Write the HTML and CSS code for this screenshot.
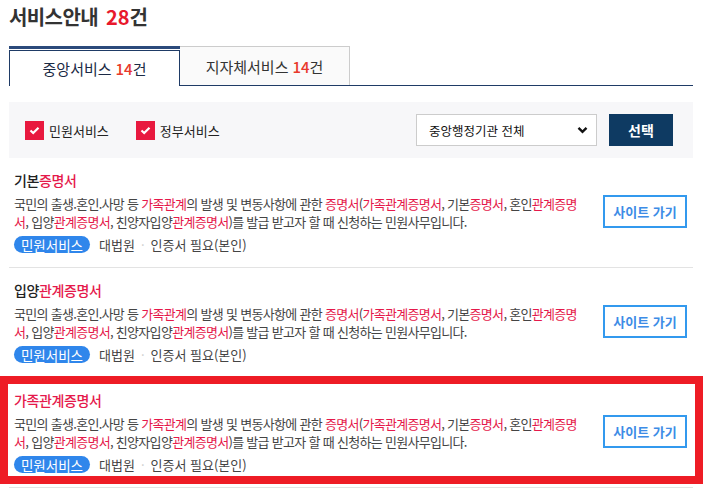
FILE: index.html
```html
<!DOCTYPE html>
<html lang="ko">
<head>
  <meta charset="UTF-8">
  <title>서비스안내</title>
  <meta name="viewport" content="width=device-width, initial-scale=1.0">
  <link rel="stylesheet" href="styles.css">
</head>
<body>
  <div class="wrap">
    <h2 class="page-title">서비스안내 <em>28</em>건</h2>

    <div class="tabs">
      <div class="tab active">중앙서비스 <em>14</em>건</div>
      <div class="tab">지자체서비스 <em>14</em>건</div>
    </div>

    <div class="filter">
      <label class="chk"><span class="box"><svg width="11" height="9" viewBox="0 0 11 9"><path d="M1.5 4.5 L4.2 7 L9.5 1.8" fill="none" stroke="#fff" stroke-width="2.2"/></svg></span>민원서비스</label>
      <label class="chk"><span class="box"><svg width="11" height="9" viewBox="0 0 11 9"><path d="M1.5 4.5 L4.2 7 L9.5 1.8" fill="none" stroke="#fff" stroke-width="2.2"/></svg></span>정부서비스</label>
      <div class="select">
        <span>중앙행정기관 전체</span>
        <svg width="11" height="8" viewBox="0 0 11 8"><path d="M1.5 1.8 L5.5 5.8 L9.5 1.8" fill="none" stroke="#111" stroke-width="2.4"/></svg>
      </div>
      <button class="btn-select">선택</button>
    </div>

    <div class="item">
      <div class="item-body">
        <div class="item-title">기본<span class="hl">증명서</span></div>
        <p class="desc">국민의 출생.혼인.사망 등 <span class="hl">가족관계</span>의 발생 및 변동사항에 관한 <span class="hl">증명서</span>(<span class="hl">가족관계증명서</span>, 기본<span class="hl">증명서</span>, 혼인<span class="hl">관계증명서</span>, 입양<span class="hl">관계증명서</span>, 친양자입양<span class="hl">관계증명서</span>)를 발급 받고자 할 때 신청하는 민원사무입니다.</p>
        <div class="meta"><span class="pill">민원서비스</span><span>대법원</span><span class="dot">·</span><span>인증서 필요(본인)</span></div>
      </div>
      <a href="#" class="btn-go">사이트 가기</a>
    </div>

    <div class="item">
      <div class="item-body">
        <div class="item-title">입양<span class="hl">관계증명서</span></div>
        <p class="desc">국민의 출생.혼인.사망 등 <span class="hl">가족관계</span>의 발생 및 변동사항에 관한 <span class="hl">증명서</span>(<span class="hl">가족관계증명서</span>, 기본<span class="hl">증명서</span>, 혼인<span class="hl">관계증명서</span>, 입양<span class="hl">관계증명서</span>, 친양자입양<span class="hl">관계증명서</span>)를 발급 받고자 할 때 신청하는 민원사무입니다.</p>
        <div class="meta"><span class="pill">민원서비스</span><span>대법원</span><span class="dot">·</span><span>인증서 필요(본인)</span></div>
      </div>
      <a href="#" class="btn-go">사이트 가기</a>
    </div>

    <div class="item marked">
      <div class="item-body">
        <div class="item-title"><span class="hl">가족관계증명서</span></div>
        <p class="desc">국민의 출생.혼인.사망 등 <span class="hl">가족관계</span>의 발생 및 변동사항에 관한 <span class="hl">증명서</span>(<span class="hl">가족관계증명서</span>, 기본<span class="hl">증명서</span>, 혼인<span class="hl">관계증명서</span>, 입양<span class="hl">관계증명서</span>, 친양자입양<span class="hl">관계증명서</span>)를 발급 받고자 할 때 신청하는 민원사무입니다.</p>
        <div class="meta"><span class="pill">민원서비스</span><span>대법원</span><span class="dot">·</span><span>인증서 필요(본인)</span></div>
      </div>
      <a href="#" class="btn-go">사이트 가기</a>
    </div>
  </div>
</body>
</html>
```

FILE: styles.css
```css
* {
  box-sizing: border-box;
}

body {
  margin: 0;
  font-family: "Noto Sans CJK KR", "Noto Sans", sans-serif;
  color: #222;
  background-color: #fff;
}

em {
  font-style: normal;
}

.wrap {
  width: 693px;
  padding-left: 9px;
}

.page-title {
  margin: 0;
  padding-top: 4px;
  font-size: 20px;
  line-height: 26px;
  font-weight: bold;
  letter-spacing: -0.6px;
  color: #333;
}

.page-title em {
  color: #e8192c;
  margin-left: 3px;
  letter-spacing: 0;
}

/* tabs */
.tabs {
  display: flex;
  align-items: flex-end;
  margin-top: 16px;
  border-bottom: 1px solid #1f3b66;
}

.tab {
  display: flex;
  align-items: center;
  justify-content: center;
  font-size: 15px;
  color: #333;
  width: 170px;
  height: 39px;
  background-color: #fafafa;
  border-top: 1px solid #ccc;
  border-right: 1px solid #ccc;
}

.tab em {
  color: #e8392c;
  font-weight: 500;
  margin-left: 4px;
}

.tab.active {
  position: relative;
  width: 171px;
  height: 36px;
  margin-bottom: -1px;
  background-color: #fff;
  color: #1b2a45;
  border: 1px solid #1f3b66;
  border-bottom: none;
}

.tab.active::before {
  content: "";
  position: absolute;
  left: -1px;
  right: -1px;
  top: -5px;
  height: 3px;
  background-color: #2b4a7b;
}

/* filter */
.filter {
  display: flex;
  align-items: center;
  height: 56px;
  margin-top: 16px;
  padding: 0 20px 0 16px;
  background-color: #f7f7f9;
}

.chk {
  display: flex;
  align-items: center;
  font-size: 13px;
  color: #222;
  margin-right: 27px;
}

.chk .box {
  display: flex;
  align-items: center;
  justify-content: center;
  width: 19px;
  height: 19px;
  margin-right: 5px;
  background-color: #e8193f;
}

.select {
  display: flex;
  align-items: center;
  justify-content: space-between;
  margin-left: auto;
  width: 181px;
  height: 32px;
  padding: 0 8px 0 12px;
  border: 1px solid #ccc;
  background-color: #fff;
  font-size: 12.5px;
  color: #111;
}

.btn-select {
  width: 64px;
  height: 32px;
  margin-left: 12px;
  border: none;
  background-color: #0e3a62;
  color: #fff;
  font-family: inherit;
  font-size: 14px;
  font-weight: bold;
}

/* items */
.item {
  display: flex;
  align-items: center;
  padding: 11px 6px 14px 5px;
  border-bottom: 1px solid #e3e3e3;
}

.item-body {
  width: 566px;
}

.item-title {
  font-size: 14px;
  line-height: 22px;
  font-weight: 500;
  letter-spacing: -0.4px;
  color: #222;
}

.hl {
  color: #e5194b;
}

.desc {
  margin: 4px 0 0;
  font-size: 13px;
  line-height: 18px;
  letter-spacing: -0.7px;
  color: #444;
}

.meta {
  display: flex;
  align-items: center;
  margin-top: 5px;
  height: 17px;
  font-size: 13px;
  color: #444;
}

.pill {
  display: inline-flex;
  align-items: center;
  justify-content: center;
  width: 76px;
  height: 17px;
  margin-right: 9px;
  border-radius: 9px;
  background-color: #2f86eb;
  color: #fff;
  font-size: 13.5px;
}

.dot {
  color: #ccc;
  margin: 0 6px;
}

.btn-go {
  display: flex;
  align-items: center;
  justify-content: center;
  margin-left: auto;
  width: 84px;
  height: 33px;
  border: 2px solid #3399ee;
  color: #3d8ce6;
  font-size: 13px;
  font-weight: bold;
  text-decoration: none;
}

/* annotation box drawn over the last item */
.item.marked {
  position: relative;
}

.item.marked::after {
  content: "";
  position: absolute;
  top: -2px;
  left: -9px;
  right: -10px;
  bottom: 3px;
  border: 8px solid #ee1c25;
}
```
